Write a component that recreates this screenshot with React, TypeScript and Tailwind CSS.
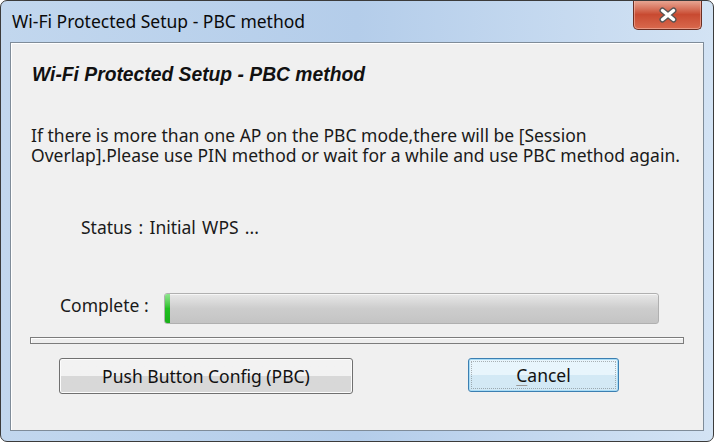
import React from 'react'

const ui = { fontFamily: '"Noto Sans", "Open Sans", sans-serif' }

function CloseButton() {
  return (
    <div className="mr-[11px] mt-[-1px] flex h-[30px] w-[69px] items-center justify-center rounded-b-[5px] border border-t-0 border-[#6b2e22] bg-gradient-to-b from-[#e9ab99] via-[#c84a31] to-[#d9694d] shadow-[inset_0_0_0_1px_rgba(255,210,200,0.45)]">
      <svg width="20" height="16" viewBox="0 0 20 16">
        <path d="M4.5 3.5 L15.5 12.5 M15.5 3.5 L4.5 12.5" stroke="#555" strokeWidth="6" strokeLinecap="round" />
        <path d="M4.5 3.5 L15.5 12.5 M15.5 3.5 L4.5 12.5" stroke="#ffffff" strokeWidth="3.4" strokeLinecap="round" />
      </svg>
    </div>
  )
}

export default function App() {
  return (
    <div
      className="flex h-[442px] w-[714px] flex-col overflow-hidden rounded-[7px] border border-[#3b3b3b] bg-gradient-to-r from-[#c2d7ee] via-[#b4cdea] to-[#d3e3f4]"
      style={ui}
    >
      {/* Title bar */}
      <div className="flex h-[41px] items-start">
        <div className="pl-[11px] pt-[9px] text-[17.5px] leading-[22px] text-[#0a0a0a]">
          Wi-Fi Protected Setup - PBC method
        </div>
        <div className="ml-auto">
          <CloseButton />
        </div>
      </div>

      {/* Client area */}
      <div className="mx-[9px] mb-[10px] flex flex-1 flex-col border border-[#7f8c99] bg-[#f0f0f0] shadow-[inset_1px_1px_0_#ffffff]">
        <div
          className="ml-[21px] mt-[21px] text-[19.3px] font-bold italic leading-[22px] text-[#111]"
          style={{ fontFamily: '"Liberation Sans", Arial, sans-serif' }}
        >
          Wi-Fi Protected Setup - PBC method
        </div>

        <p className="ml-[20px] mt-[39px] text-[17.5px] leading-[20px] text-[#1a1a1a]">
          If there is more than one AP on the PBC mode,there will be [Session
          <br />
          Overlap].Please use PIN method or wait for a while and use PBC method again.
        </p>

        <div className="ml-[70px] mt-[52px] text-[17.5px] leading-[20px] text-[#1a1a1a] [word-spacing:1.7px]">
          Status : Initial WPS ...
        </div>

        <div className="mt-[56px] flex items-start">
          <div className="ml-[49px] mt-[2px] w-[104px] text-[17.5px] leading-[20px] text-[#1a1a1a]">Complete :</div>
          <div className="flex h-[31px] w-[495px] overflow-hidden rounded-[3px] border border-[#b0b0b0] bg-gradient-to-b from-[#e8e8e8] via-[#cdcdcd] to-[#c4c4c4] shadow-[inset_0_1px_0_#f6f6f6]">
            <div className="w-[5px] bg-gradient-to-b from-[#8ee68e] via-[#22c022] to-[#19b019]" />
          </div>
        </div>

        <div className="ml-[19px] mt-[13px] h-[7px] w-[654px] border border-[#7c7c7c] bg-[#eeeeee] shadow-[inset_1px_1px_0_#ffffff]" />

        <div className="mt-[14px] flex items-start">
          <button className="ml-[48px] h-[36px] w-[294px] rounded-[3px] border border-[#707070] bg-gradient-to-b from-[#f2f2f2] from-50% to-[#d8d8d8] to-50% text-[17.5px] text-[#111] shadow-[inset_0_0_0_1px_#fcfcfc]">
            Push Button Config (PBC)
          </button>
          <button className="ml-[115px] h-[34px] w-[151px] rounded-[3px] border border-[#3c7fb1] bg-gradient-to-b from-[#e8f5fc] from-50% to-[#d3e9f5] to-50% p-[2px] text-[17.5px] text-[#111] shadow-[inset_0_0_0_1px_#a8dcf6]">
            <span className="flex h-full w-full items-center justify-center border border-dotted border-[#4a4a4a]/40">
              <span>
                <span className="underline decoration-[#999] underline-offset-[3px]">C</span>ancel
              </span>
            </span>
          </button>
        </div>
      </div>
    </div>
  )
}
